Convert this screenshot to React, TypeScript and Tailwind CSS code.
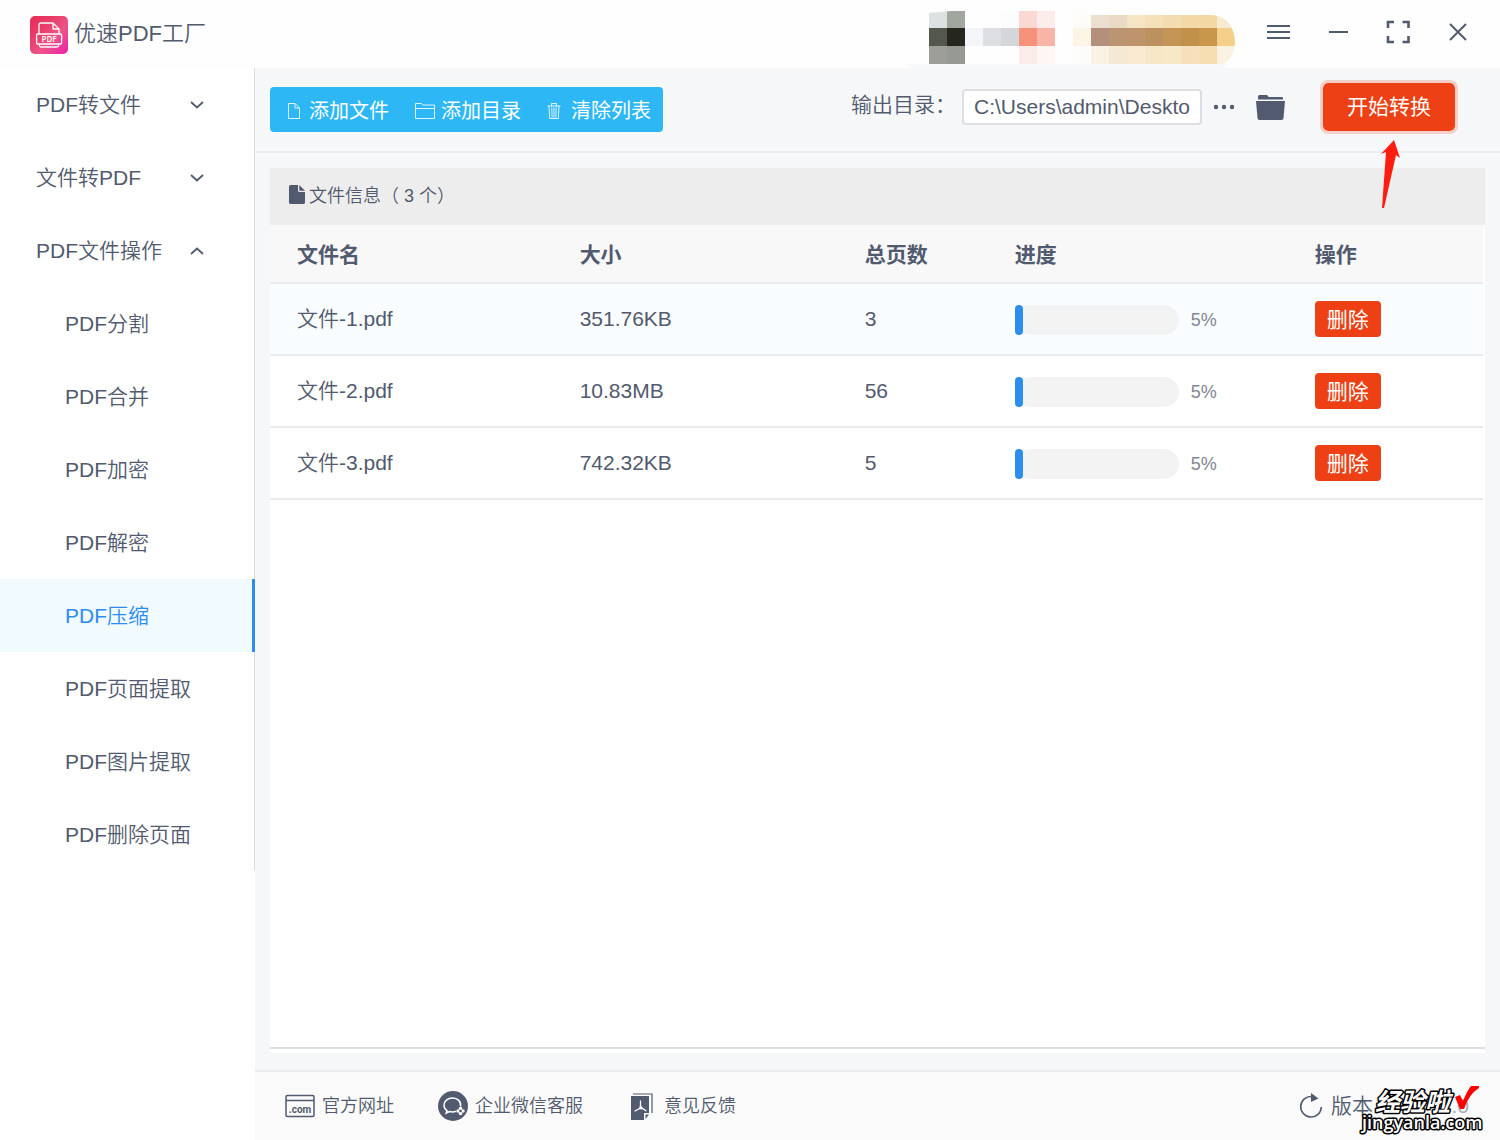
import React, { useState } from "react";

const INK = "#515a6e";

interface FileRow {
  name: string;
  size: string;
  pages: number;
  progress: number;
}

const groups = [
  { title: "PDF转文件", open: false, items: [] },
  { title: "文件转PDF", open: false, items: [] },
  {
    title: "PDF文件操作",
    open: true,
    items: [
      "PDF分割",
      "PDF合并",
      "PDF加密",
      "PDF解密",
      "PDF压缩",
      "PDF页面提取",
      "PDF图片提取",
      "PDF删除页面",
    ],
  },
];

const initialFiles: FileRow[] = [
  { name: "文件-1.pdf", size: "351.76KB", pages: 3, progress: 5 },
  { name: "文件-2.pdf", size: "10.83MB", pages: 56, progress: 5 },
  { name: "文件-3.pdf", size: "742.32KB", pages: 5, progress: 5 },
];

// 18px mosaic cells, [x, row, colour]
const mosaic: [number, number, string][] = [
  [23, 0, "#dce2e1"],
  [41, 0, "#a1a69f"],
  [95, 0, "#fdfcfc"],
  [113, 0, "#f9d9d2"],
  [131, 0, "#fcecea"],
  [167, 0, "#fdfcf8"],
  [185, 0, "#ecdfd0"],
  [203, 0, "#eadac4"],
  [221, 0, "#f6e5c4"],
  [239, 0, "#f4e0b9"],
  [257, 0, "#f3dcaf"],
  [275, 0, "#f3d9a5"],
  [293, 0, "#f3d8a3"],
  [311, 0, "#f8ead0"],
  [23, 1, "#53574d"],
  [41, 1, "#25271e"],
  [59, 1, "#f4f5f8"],
  [77, 1, "#dedfe2"],
  [95, 1, "#d5d6da"],
  [113, 1, "#f6917a"],
  [131, 1, "#f6b5a6"],
  [167, 1, "#fcf5e6"],
  [185, 1, "#b38f7c"],
  [203, 1, "#ba9473"],
  [221, 1, "#bd946b"],
  [239, 1, "#bb915f"],
  [257, 1, "#c39657"],
  [275, 1, "#c1904a"],
  [293, 1, "#c8974b"],
  [311, 1, "#f3cf8a"],
  [23, 2, "#9d9e98"],
  [41, 2, "#979993"],
  [113, 2, "#fbebe9"],
  [131, 2, "#fdf6f5"],
  [167, 2, "#fcfcfb"],
  [185, 2, "#faf2e2"],
  [203, 2, "#f5e9d6"],
  [221, 2, "#faead1"],
  [239, 2, "#f7e7c7"],
  [257, 2, "#f7e8c8"],
  [275, 2, "#f6dfba"],
  [293, 2, "#f6deb2"],
  [311, 2, "#faf2e2"],
];

function Logo() {
  return (
    <svg className="mt-0.5" width="38" height="38" viewBox="0 0 38 38" fill="none">
      <defs>
        <linearGradient id="logo" x1="0" y1="0" x2="1" y2="1">
          <stop offset="0" stopColor="#e92d5a" />
          <stop offset="0.3" stopColor="#ea3a66" />
          <stop offset="0.6" stopColor="#ec5586" />
          <stop offset="1" stopColor="#ec1fae" />
        </linearGradient>
      </defs>
      <rect width="38" height="38" rx="5" fill="url(#logo)" />
      <g stroke="#fff" strokeWidth="1.3" strokeLinejoin="round">
        <path d="M9 18V9q0-2 2-2h12l6 6v5M23 7v6h6" />
        <rect x="6.6" y="18" width="25" height="10" rx="1" />
        <path d="M9.500 28v1.500q0 1.500 1.500 1.500h16q1.500 0 1.500-1.500V28" />
      </g>
      <text
        x="19"
        y="26"
        textAnchor="middle"
        fill="#fff"
        fontSize="8"
        fontWeight="600"
        fontFamily="Open Sans, sans-serif"
      >
        PDF
      </text>
    </svg>
  );
}

function Chevron({ up }: { up: boolean }) {
  return (
    <svg width="14" height="8" viewBox="0 0 14 8" fill="none" stroke={INK} strokeWidth="1.8">
      <path d={up ? "M1 7l6-5.500L13 7" : "M1 1l6 5.500L13 1"} />
    </svg>
  );
}

function PageIcon() {
  return (
    <svg width="14" height="18" viewBox="0 0 14 18" fill="none" stroke="#fff" strokeOpacity="0.85">
      <path d="M1.500 1.500h6.500l4.500 4.500v10.500h-11zM8 1.500V6h4.500" />
    </svg>
  );
}

function FolderLineIcon() {
  return (
    <svg width="20" height="18" viewBox="0 0 20 18" fill="none" stroke="#fff" strokeOpacity="0.85">
      <path d="M.5 16.500v-15h6l1.500 1.500h11.500v13.500zM.5 6.500h19" />
    </svg>
  );
}

function TrashIcon() {
  return (
    <svg width="14" height="18" viewBox="0 0 14 18" fill="none" stroke="#fff" strokeOpacity="0.85">
      <path d="M.5 4h13M4.500 4V1.500h5V4M2 4l.7 12.500h8.600L12 4M4.800 5.500l.3 10M7 5.500v10M9.200 5.500l-.3 10" />
    </svg>
  );
}

function FolderIcon() {
  return (
    <svg width="29" height="26" viewBox="0 0 29 26" fill={INK}>
      <path d="M2 5.500V2.500Q2 1 3.500 1h7q1 0 1.500 1l.5 1H26q1 0 1 1v1.500z" />
      <path d="M0 7h29l-1.500 17q-.1 2-2 2h-22q-1.900 0-2-2z" />
    </svg>
  );
}

function SiteIcon() {
  return (
    <svg width="30" height="24" viewBox="0 0 30 24" fill="none" stroke={INK} strokeWidth="1.5">
      <rect x="1" y="1.500" width="28" height="21" rx="1.500" />
      <path d="M1 6.500h28" />
      <text
        x="15"
        y="19"
        textAnchor="middle"
        stroke="none"
        fill={INK}
        fontSize="10"
        fontWeight="700"
        fontFamily="Liberation Sans Narrow, Roboto, sans-serif"
      >
        .com
      </text>
    </svg>
  );
}

function ChatIcon() {
  return (
    <svg width="30" height="30" viewBox="0 0 30 30" fill="none">
      <circle cx="15" cy="15" r="15" fill={INK} />
      <path
        d="M22.500 15.500C23.500 10.500 19.500 7 14.500 7S6 10.200 6 14.200c0 2.400 1.200 4.200 3 5.400L8.200 22l3.300-1.500c2 .6 4.500.5 6.500-.3"
        stroke="#fff"
        strokeWidth="1.5"
      />
      <g fill="#fff">
        <circle cx="22.500" cy="17.500" r="1.800" />
        <circle cx="22.500" cy="22.500" r="1.800" />
        <circle cx="20" cy="20" r="1.700" />
        <circle cx="25" cy="20" r="1.700" />
      </g>
      <circle cx="22.500" cy="20" r="1.200" fill={INK} />
    </svg>
  );
}

function FeedbackIcon() {
  return (
    <svg width="22" height="27" viewBox="0 0 22 27" fill="none">
      <path d="M2 1h19v19" stroke={INK} strokeWidth="1.2" />
      <path d="M0 3h18v17h-5v7H0z" fill={INK} />
      <path d="M14.500 21.500H18L14.500 26z" fill={INK} />
      <path
        d="M9.500 8v5M9.500 13l-1 2.500-4.500 2.500M8.500 15.500h3l3.500 2.200M9.500 13l2 2.500"
        stroke="#fff"
        strokeWidth="1.3"
        strokeLinecap="round"
      />
    </svg>
  );
}

function RefreshIcon() {
  return (
    <svg width="24" height="26" viewBox="0 0 24 26" fill="none">
      <path d="M13 3.500A10.300 10.300 0 1 0 22.300 14" stroke={INK} strokeWidth="1.6" />
      <path d="M12 0v9l7.500-3.500z" fill={INK} />
    </svg>
  );
}

function TitleBar() {
  return (
    <header className="relative flex h-[68px] shrink-0 items-center bg-[#fefefe] px-[30px]">
      <Logo />
      <h1 className="ml-1.5 flex-1 text-[22px] leading-8">优速PDF工厂</h1>
      <svg
        className="absolute right-[264px] top-[10px]"
        width="330"
        height="58"
        viewBox="0 0 330 58"
      >
        <defs>
          <clipPath id="badge">
            <path d="M22 3L45 1H160V4L185 5H305C322 5 329 20 329 32C329 44 322 54 315 54H22z" />
          </clipPath>
        </defs>
        <path d="M0 54h322l-6 4H6z" fill="#f7f8fa" />
        <g clipPath="url(#badge)">
          {mosaic.map(([x, row, color]) => (
            <rect key={`${x}-${row}`} x={x} y={row * 18} width="18" height="18" fill={color} />
          ))}
        </g>
      </svg>
      <nav className="flex items-center gap-9 pb-1">
        <button type="button" aria-label="菜单">
          <svg width="24" height="24" viewBox="0 0 24 24" stroke={INK} strokeWidth="2">
            <path d="M1 6h23M1 12h23M1 18h23" />
          </svg>
        </button>
        <button type="button" aria-label="最小化">
          <svg width="24" height="24" viewBox="0 0 24 24" stroke={INK} strokeWidth="2">
            <path d="M3 12h19" />
          </svg>
        </button>
        <button type="button" aria-label="最大化">
          <svg width="24" height="24" viewBox="0 0 24 24" fill="none" stroke={INK} strokeWidth="2.6">
            <path d="M2 8V2h6M16.500 2h6v6M22.500 16v6h-6M8 22H2v-6" />
          </svg>
        </button>
        <button type="button" aria-label="关闭">
          <svg width="24" height="24" viewBox="0 0 24 24" stroke={INK} strokeWidth="2">
            <path d="M4 4l16 16M20 4L4 20" />
          </svg>
        </button>
      </nav>
    </header>
  );
}

function Sidebar({
  active,
  onSelect,
}: {
  active: string;
  onSelect: (item: string) => void;
}) {
  return (
    <aside className="w-[255px] shrink-0 bg-white">
      <nav className="border-r border-[#dcdee2]">
        {groups.map((group) => (
          <div key={group.title}>
            <button
              type="button"
              aria-expanded={group.open}
              className="flex h-[73px] w-full items-center justify-between pl-9 pr-[50px]"
            >
              {group.title}
              <Chevron up={group.open} />
            </button>
            {group.items.map((item) => (
              <a
                key={item}
                href="#"
                onClick={() => onSelect(item)}
                className={
                  item === active
                    ? "-mr-px flex h-[73px] items-center border-r-3 border-[#2d8cf0] bg-[#f0faff] pl-[65px] text-[#2d8cf0]"
                    : "flex h-[73px] items-center pl-[65px]"
                }
              >
                {item}
              </a>
            ))}
          </div>
        ))}
      </nav>
    </aside>
  );
}

function Toolbar({ onClear }: { onClear: () => void }) {
  return (
    <div className="relative flex h-[85px] shrink-0 items-start border-b-2 border-[#ebedee] pl-[15px] pr-[42px] pt-3">
      <div className="mt-[7px] flex h-[45px] items-center gap-[26px] rounded bg-[#2db7f5] pl-[17px] pr-3 pt-0.5 text-[20px] font-normal text-white">
        <button type="button" className="flex items-center gap-2">
          <PageIcon />
          添加文件
        </button>
        <button type="button" className="flex items-center gap-1.5">
          <FolderLineIcon />
          添加目录
        </button>
        <button type="button" onClick={onClear} className="flex items-center gap-2.5">
          <TrashIcon />
          清除列表
        </button>
      </div>
      <div className="ml-auto flex items-center">
        <label htmlFor="output" className="pb-1">
          输出目录：
        </label>
        <input
          id="output"
          defaultValue="C:\Users\admin\Deskto"
          className="ml-1.5 h-9 w-60 rounded border-2 border-[#dcdee2] bg-white px-2.5 text-[21px] outline-none"
        />
        <button type="button" aria-label="选择目录" className="ml-[11px]">
          <svg width="22" height="6" viewBox="0 0 22 6" fill={INK}>
            <circle cx="3" cy="3" r="2.200" />
            <circle cx="11" cy="3" r="2.200" />
            <circle cx="19" cy="3" r="2.200" />
          </svg>
        </button>
        <button type="button" aria-label="打开目录" className="ml-[21px]">
          <FolderIcon />
        </button>
        <button
          type="button"
          className="ml-[35px] h-[54px] w-[138px] rounded-lg border-3 border-[#f6d0c8] bg-[#ed4014] bg-clip-padding font-normal text-white"
        >
          开始转换
        </button>
      </div>
      <svg
        className="absolute right-[98px] top-[71px]"
        width="22"
        height="70"
        viewBox="0 0 22 70"
        fill="#ff1d12"
      >
        <path d="M14 1L20 19l-4-3L4 69H2L6 13l-5 2z" />
      </svg>
    </div>
  );
}

function FilePanel({
  files,
  onRemove,
}: {
  files: FileRow[];
  onRemove: (name: string) => void;
}) {
  return (
    <section className="mx-[15px] mb-[17px] mt-[15px] flex flex-1 flex-col bg-white pb-1">
      <div className="flex-1 border-b-2 border-[#dcdee2]">
        <h2 className="flex h-[57px] items-center bg-[#ededed] pl-[19px] text-[18px]">
          <svg className="mb-1" width="16" height="19" viewBox="0 0 16 19">
            <path
              d="M1.500 0H9v5.500Q9 7 10.500 7H16v10.500q0 1.500-1.500 1.500h-13Q0 19 0 17.500v-16Q0 0 1.500 0zM10.300 0L16 5.800h-5.700z"
              fill={INK}
            />
          </svg>
          <span className="ml-1">文件信息（ 3 个）</span>
        </h2>
        <div className="pr-0.5">
          <table className="w-full table-fixed text-left">
            <colgroup>
              <col className="w-[23.3%]" />
              <col className="w-[23.5%]" />
              <col className="w-[150px]" />
              <col className="w-[300px]" />
              <col />
            </colgroup>
            <thead>
              <tr className="h-[58px] border-b-2 border-[#e8eaec] bg-[#f8f8f9]">
                <th className="pl-[27px] pt-0.5 font-bold">文件名</th>
                <th className="pl-[27px] pt-0.5 font-bold">大小</th>
                <th className="pl-[27px] pt-0.5 font-bold">总页数</th>
                <th className="pl-[27px] pt-0.5 font-bold">进度</th>
                <th className="pl-[27px] pt-0.5 font-bold">操作</th>
              </tr>
            </thead>
            <tbody>
              {files.map((file, index) => (
                <tr
                  key={file.name}
                  className={
                    index === 0
                      ? "h-[72px] border-b-2 border-[#e8eaec] bg-[#f9fdff]"
                      : "h-[72px] border-b-2 border-[#e8eaec]"
                  }
                >
                  <td className="pl-[27px]">{file.name}</td>
                  <td className="pl-[27px]">{file.size}</td>
                  <td className="pl-[27px]">{file.pages}</td>
                  <td className="pl-[27px] pt-0.5">
                    <div className="flex items-center gap-3">
                      <div className="h-[30px] w-[164px] rounded-full bg-[#f3f3f3]">
                        <div
                          className="h-full rounded bg-[#2d8cf0]"
                          style={{ width: `${file.progress}%` }}
                        />
                      </div>
                      <span className="text-[18px] text-[#808695]">{file.progress}%</span>
                    </div>
                  </td>
                  <td className="pl-[27px]">
                    <button
                      type="button"
                      onClick={() => onRemove(file.name)}
                      className="flex h-9 w-[66px] items-center justify-center rounded bg-[#ed4014] pt-0.5 font-normal text-white"
                    >
                      删除
                    </button>
                  </td>
                </tr>
              ))}
            </tbody>
          </table>
        </div>
      </div>
    </section>
  );
}

function Footer() {
  return (
    <footer className="flex h-[70px] shrink-0 items-center border-t-2 border-[#ebedee] bg-[#fafafa] pl-[30px] pr-[15px] text-[18px]">
      <a href="#" className="flex items-center gap-[7px]">
        <SiteIcon />
        官方网址
      </a>
      <a href="#" className="ml-11 flex items-center gap-[7px]">
        <ChatIcon />
        企业微信客服
      </a>
      <a href="#" className="ml-12 flex items-center gap-[11px]">
        <FeedbackIcon />
        意见反馈
      </a>
      <div className="relative ml-auto flex w-[186px] items-center gap-2 text-[21px]">
        <RefreshIcon />
        <span>版本</span>
        <span className="ml-auto pr-4 text-[#a9adb8]">.0</span>
        <svg
          className="absolute -right-2 -top-2"
          width="140"
          height="56"
          viewBox="0 0 140 56"
          fill="#fff"
          stroke="#000"
          strokeWidth="3"
          strokeLinejoin="round"
          paintOrder="stroke"
        >
          <text
            x="22"
            y="29"
            fontSize="25"
            fontWeight="700"
            fontStyle="italic"
            fontFamily="Noto Sans CJK SC, sans-serif"
          >
            经验啦
          </text>
          <text x="9" y="47" fontSize="18" fontWeight="600" fontFamily="Open Sans, sans-serif">
            jingyanla.com
          </text>
          <path d="M102 15l5-2 3 6q4-10 8-15h8v2q-10 6-15 21h-4z" fill="#f00" stroke="none" />
        </svg>
      </div>
    </footer>
  );
}

export default function App() {
  const [active, setActive] = useState("PDF压缩");
  const [files, setFiles] = useState(initialFiles);

  return (
    <div className="flex min-h-screen flex-col bg-white font-['Liberation_Sans','Noto_Sans_CJK_SC',sans-serif] text-[21px] font-[350] text-[#515a6e]">
      <TitleBar />
      <div className="flex flex-1">
        <Sidebar active={active} onSelect={setActive} />
        <main className="flex min-w-0 flex-1 flex-col bg-[#f5f7f9]">
          <Toolbar onClear={() => setFiles([])} />
          <FilePanel
            files={files}
            onRemove={(name) => setFiles(files.filter((file) => file.name !== name))}
          />
          <Footer />
        </main>
      </div>
    </div>
  );
}
